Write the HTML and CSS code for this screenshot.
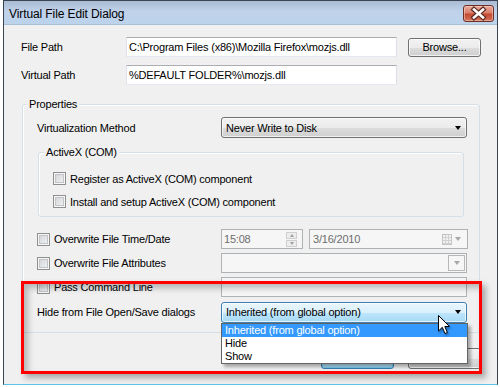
FILE: index.html
```html
<!DOCTYPE html>
<html lang="en">
<head>
    <meta charset="UTF-8">
    <title>Virtual File Edit Dialog</title>
    <link rel="stylesheet" href="styles.css">
</head>
<body>

    <div class="window">
        <!-- Title Bar -->
        <div class="titlebar">
            <span class="title">Virtual File Edit Dialog</span>
            <div class="close-btn">
                <svg width="29" height="15" viewBox="0 0 29 15">
                    <path d="M10 3.5 L19 11.5 M19 3.5 L10 11.5" stroke="#5a2a22" stroke-width="5" stroke-linecap="square"/>
                    <path d="M10 3.5 L19 11.5 M19 3.5 L10 11.5" stroke="#fff" stroke-width="2.6" stroke-linecap="square"/>
                </svg>
            </div>
        </div>

        <!-- Client Area -->
        <div class="client">
            <div class="row">
                <span class="row-label">File Path</span>
                <div class="textbox path-box">C:\Program Files (x86)\Mozilla Firefox\mozjs.dll</div>
                <div class="btn browse-btn">Browse...</div>
            </div>
            <div class="row row-second">
                <span class="row-label">Virtual Path</span>
                <div class="textbox path-box">%DEFAULT FOLDER%\mozjs.dll</div>
            </div>

            <div class="group props">
                <div class="group-title">Properties</div>

                <div class="prop-row method-row">
                    <span class="prop-label">Virtualization Method</span>
                    <div class="combo">
                        <span>Never Write to Disk</span>
                        <span class="arrow"></span>
                    </div>
                </div>

                <div class="group activex">
                    <div class="group-title">ActiveX (COM)</div>
                    <div class="check-row"><span class="checkbox"></span>Register as ActiveX (COM) component</div>
                    <div class="check-row"><span class="checkbox"></span>Install and setup ActiveX (COM) component</div>
                </div>

                <div class="prop-row time-row">
                    <span class="prop-label"><span class="checkbox"></span>Overwrite File Time/Date</span>
                    <div class="textbox disabled time-box">
                        <span>15:08</span>
                        <div class="spinner">
                            <span class="spin-up"></span>
                            <span class="spin-down"></span>
                        </div>
                    </div>
                    <div class="textbox disabled date-box">
                        <span>3/16/2010</span>
                        <span class="calendar"></span>
                        <span class="arrow gray"></span>
                    </div>
                </div>

                <div class="prop-row attr-row">
                    <span class="prop-label"><span class="checkbox"></span>Overwrite File Attributes</span>
                    <div class="textbox disabled attr-box">
                        <span class="drop-btn"><span class="arrow gray"></span></span>
                    </div>
                </div>

                <div class="prop-row pass-row">
                    <span class="prop-label"><span class="checkbox"></span>Pass Command Line</span>
                    <div class="textbox disabled pass-box"></div>
                </div>

                <div class="prop-row hide-row">
                    <span class="prop-label">Hide from File Open/Save dialogs</span>
                    <div class="combo-wrap">
                        <div class="combo focused">
                            <span>Inherited (from global option)</span>
                            <span class="arrow"></span>
                        </div>
                        <!-- open dropdown list -->
                        <div class="dropdown">
                            <div class="option selected">Inherited (from global option)</div>
                            <div class="option">Hide</div>
                            <div class="option">Show</div>
                        </div>
                    </div>
                </div>
            </div>

            <div class="button-row">
                <div class="btn default-btn">OK</div>
                <div class="btn">Cancel</div>
            </div>
        </div>

        <!-- annotation + mouse pointer -->
        <div class="highlight"></div>
        <svg class="cursor" width="13" height="20" viewBox="0 0 13 20">
            <path d="M0.5 0.5 L0.5 16 L4.3 12.3 L7 18.5 L9.4 17.5 L6.8 11.5 L11.5 11.5 Z" fill="#fff" stroke="#000" stroke-width="1" stroke-linejoin="miter"/>
        </svg>
    </div>

</body>
</html>
```

FILE: styles.css
```css
* {
    margin: 0;
    padding: 0;
    box-sizing: border-box;
}

body {
    background: #fff;
    font-family: "Liberation Sans", Arial, sans-serif;
    font-size: 11px;
    letter-spacing: -0.2px;
    color: #000;
}

/* Window frame */
.window {
    position: relative;
    margin-left: 3px;
    width: 495px;
    height: 385px;
    border: 1px solid #3a4452;
    border-bottom-color: #5dc3e6;
    background: #f0f0f0;
    display: flex;
    flex-direction: column;
}

.titlebar {
    height: 24px;
    display: flex;
    align-items: flex-start;
    background: linear-gradient(to bottom, #a9bcd4, #bfd2ea 45%, #bcd3ec);
    border-bottom: 1px solid #a9bfd8;
}

.title {
    font-size: 12px;
    letter-spacing: -0.1px;
    line-height: 20px;
    padding: 3px 0 0 5px;
}

.close-btn {
    margin: 4px 3px 0 auto;
    width: 31px;
    height: 17px;
    border: 1px solid #6b2f27;
    border-radius: 3px;
    background: linear-gradient(to bottom, #e9a99a, #d9806c 45%, #c44a31 55%, #d4735b);
    box-shadow: inset 0 0 0 1px rgba(255, 220, 210, 0.5);
}

.close-btn svg {
    display: block;
}

/* Client area */
.client {
    flex: 1;
    padding: 12px 16px 0 17px;
}

.row {
    display: flex;
    align-items: center;
    height: 20px;
}

.row-second {
    margin-top: 8px;
}

.row-label {
    width: 105px;
}

.textbox {
    height: 20px;
    background: #fff;
    border: 1px solid;
    border-color: #abadb3 #dbdfe6 #e3e9ef #e2e3ea;
    padding-left: 2px;
    display: flex;
    align-items: center;
}

.textbox.disabled {
    background: #f6f6f6;
    border-color: #adb2b5;
    color: #6d6d6d;
}

.path-box {
    width: 271px;
}

.btn {
    width: 73px;
    height: 21px;
    border: 1px solid #707070;
    border-radius: 3px;
    background: linear-gradient(to bottom, #f2f2f2, #ebebeb 50%, #dddddd 50%, #cfcfcf);
    box-shadow: inset 0 0 0 1px rgba(255, 255, 255, 0.7);
    display: flex;
    align-items: center;
    justify-content: center;
}

.browse-btn {
    margin-left: 11px;
    height: 19px;
}

/* Group boxes */
.group {
    border: 1px solid #d5dfe5;
    border-radius: 3px;
    box-shadow: inset 1px 1px 0 #fff;
}

.group-title {
    width: fit-content;
    height: 13px;
    line-height: 13px;
    margin-top: -7px;
    padding: 0 2px;
    background: #f0f0f0;
}

.props {
    margin: 19px 0 0 1px;
    width: 458px;
    padding-bottom: 10px;
}

.props > .group-title {
    margin-left: 4px;
}

.prop-row {
    display: flex;
    align-items: center;
    height: 20px;
    padding-left: 14px;
}

.prop-label {
    width: 184px;
    display: flex;
    align-items: center;
}

.method-row {
    margin-top: 6px;
    height: 21px;
}

.combo {
    width: 246px;
    height: 21px;
    border: 1px solid #707070;
    border-radius: 3px;
    background: linear-gradient(to bottom, #f2f2f2, #ebebeb 50%, #dddddd 50%, #cfcfcf);
    box-shadow: inset 0 0 0 1px rgba(255, 255, 255, 0.7);
    display: flex;
    align-items: center;
    padding: 0 5px 0 4px;
}

.combo.focused {
    border-color: #3c7fb1;
    background: linear-gradient(to bottom, #eaf6fd, #d9f0fc 50%, #bee6fd 50%, #a7d9f5);
}

.arrow {
    margin-left: auto;
    width: 0;
    height: 0;
    border-left: 3.5px solid transparent;
    border-right: 3.5px solid transparent;
    border-top: 4px solid #000;
}

.arrow.gray {
    border-top-color: #a8a8a8;
}

.activex {
    margin: 14px 0 0 15px;
    width: 426px;
    padding: 0 0 3px 14px;
}

.activex > .group-title {
    margin-left: -9px;
    margin-bottom: 8px;
}

.check-row {
    height: 23px;
    display: flex;
    align-items: center;
}

.checkbox {
    width: 13px;
    height: 13px;
    margin-right: 4px;
    flex-shrink: 0;
    border: 1px solid #8f8f8f;
    background: linear-gradient(135deg, #cdd0d4, #f6f6f6);
    box-shadow: inset 0 0 0 1px #f7f7f7, inset 0 0 0 2px #c2c4c8;
}

.time-row {
    margin-top: 12px;
}

.time-box {
    width: 82px;
}

.spinner {
    margin: 0 5px 0 auto;
    display: flex;
    flex-direction: column;
    gap: 1px;
}

.spin-up,
.spin-down {
    width: 11px;
    height: 7px;
    border: 1px solid #cfcfcf;
    background: #ededed;
    display: flex;
    align-items: center;
    justify-content: center;
}

.spin-up::after,
.spin-down::after {
    content: "";
    border-left: 2.5px solid transparent;
    border-right: 2.5px solid transparent;
}

.spin-up::after {
    border-bottom: 3px solid #a0a0a0;
}

.spin-down::after {
    border-top: 3px solid #a0a0a0;
}

.date-box {
    width: 159px;
    margin-left: 6px;
    padding-left: 3px;
    padding-right: 6px;
}

.calendar {
    margin-left: auto;
    width: 10px;
    height: 11px;
    border: 1px solid #c4c4c4;
    background:
        repeating-linear-gradient(to right, transparent 0 2px, #d0d0d0 2px 3px),
        repeating-linear-gradient(to bottom, transparent 0 2px, #d0d0d0 2px 3px),
        #f2f2f2;
}

.date-box .arrow {
    margin-left: 3px;
}

.attr-row,
.pass-row {
    margin-top: 4px;
}

.attr-box,
.pass-box {
    width: 246px;
}

.attr-box {
    justify-content: flex-end;
    padding-right: 1px;
}

.drop-btn {
    width: 17px;
    height: 16px;
    border: 1px solid #b8b8b8;
    display: flex;
    align-items: center;
    justify-content: center;
}

.drop-btn .arrow {
    margin: 0;
}

.hide-row {
    margin-top: 5px;
}

.combo-wrap {
    position: relative;
}

.dropdown {
    position: absolute;
    top: 100%;
    left: 0;
    width: 247px;
    background: #fff;
    border: 1px solid #646464;
    box-shadow: 3px 3px 3px rgba(0, 0, 0, 0.3);
    z-index: 2;
}

.option {
    height: 13px;
    line-height: 13px;
    padding-left: 3px;
}

.option.selected {
    background: #3399ff;
    color: #fff;
}

.button-row {
    margin-top: 15px;
    display: flex;
    justify-content: flex-end;
    gap: 14px;
}

.default-btn {
    border-color: #3c7fb1;
    background: linear-gradient(to bottom, #eaf6fd, #d9f0fc 50%, #bee6fd 50%, #a7d9f5);
    box-shadow: inset 0 0 0 1px #78d0f4;
}

/* red annotation frame */
.highlight {
    position: absolute;
    left: 17px;
    top: 280px;
    width: 461px;
    height: 93px;
    border: 3px solid #ff0000;
    box-shadow: 4px 4px 6px rgba(0, 0, 0, 0.3), inset 4px 4px 6px rgba(0, 0, 0, 0.25);
    z-index: 3;
}

.cursor {
    position: absolute;
    left: 434px;
    top: 314px;
    z-index: 4;
    filter: drop-shadow(1px 2px 1px rgba(0, 0, 0, 0.3));
}
```
